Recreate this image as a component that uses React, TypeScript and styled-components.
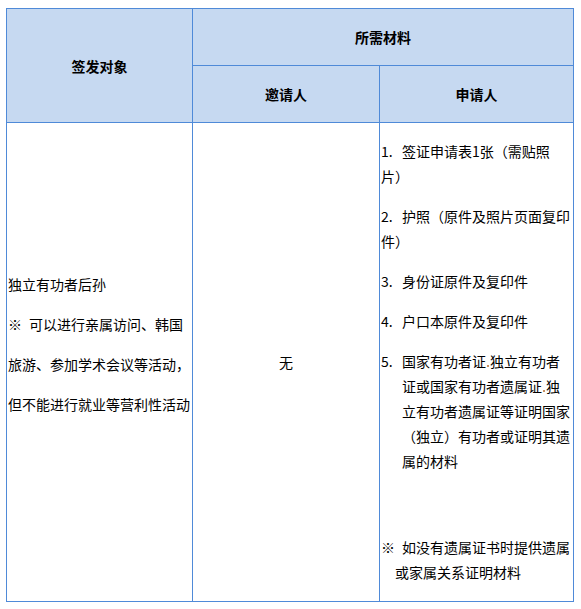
import React from 'react'
import styled, { createGlobalStyle } from 'styled-components'

const GlobalStyle = createGlobalStyle`
  html, body {
    margin: 0;
    padding: 0;
    background: #fff;
  }
  body {
    font-family: "Noto Sans CJK SC", "Liberation Sans", sans-serif;
    font-size: 14px;
    color: #000;
  }
`

const Page = styled.div`
  padding: 8px 0 0 6px;
`

const Table = styled.table`
  border-collapse: collapse;
  table-layout: fixed;
  width: 568px;
`

const Col = styled.col<{ $w: number }>`
  width: ${(p) => p.$w}px;
`

const Row = styled.tr<{ $h: number }>`
  height: ${(p) => p.$h}px;
`

const Th = styled.th`
  border: 1px solid #4f8ad8;
  background-color: #c6d9f1;
  font-weight: bold;
  font-size: 14px;
  text-align: center;
  vertical-align: middle;
  padding: 0;
`

const Td = styled.td<{ $center?: boolean }>`
  border: 1px solid #4f8ad8;
  vertical-align: middle;
  text-align: ${(p) => (p.$center ? 'center' : 'left')};
  padding: 0 1px;
`

const TargetBox = styled.div`
  padding-bottom: 37px;
`

const TargetLine = styled.div`
  line-height: 40px;
  white-space: nowrap;
`

const Stack = styled.div`
  display: flex;
  flex-direction: column;
  gap: 15px;
`

const Item = styled.p<{ $hang?: number; $gapTop?: number }>`
  margin: 0;
  margin-top: ${(p) => p.$gapTop ?? 0}px;
  line-height: 25px;
  white-space: nowrap;
  padding-left: ${(p) => p.$hang ?? 0}px;
  text-indent: -${(p) => p.$hang ?? 0}px;
`

const Num = styled.span`
  display: inline-block;
  width: 21px;
  text-indent: 0;
  line-height: 25px;
`

const Mark = styled.span`
  display: inline-block;
  width: 21px;
  text-indent: 0;
  line-height: 25px;
`

const Dot = styled.span`
  display: inline-block;
  width: 2px;
  height: 2px;
  margin: 0 1px;
  background-color: #c89060;
  vertical-align: 0;
`

export default function App() {
  return (
    <Page>
      <GlobalStyle />
      <Table>
        <colgroup>
          <Col $w={186} />
          <Col $w={187} />
          <Col $w={194} />
        </colgroup>
        <thead>
          <Row $h={57}>
            <Th rowSpan={2}>签发对象</Th>
            <Th colSpan={2}>所需材料</Th>
          </Row>
          <Row $h={57}>
            <Th>邀请人</Th>
            <Th>申请人</Th>
          </Row>
        </thead>
        <tbody>
          <Row $h={479}>
            <Td>
              <TargetBox>
                <TargetLine>独立有功者后孙</TargetLine>
                <TargetLine><Mark>※</Mark>可以进行亲属访问、韩国</TargetLine>
                <TargetLine>旅游、参加学术会议等活动，</TargetLine>
                <TargetLine>但不能进行就业等营利性活动</TargetLine>
              </TargetBox>
            </Td>
            <Td $center>无</Td>
            <Td>
              <Stack>
                <Item><Num>1.</Num>签证申请表1张（需贴照<br />片）</Item>
                <Item><Num>2.</Num>护照（原件及照片页面复印<br />件）</Item>
                <Item><Num>3.</Num>身份证原件及复印件</Item>
                <Item><Num>4.</Num>户口本原件及复印件</Item>
                <Item $hang={21}>
                  <Num>5.</Num>国家有功者证<Dot />独立有功者<br />
                  证或国家有功者遗属证<Dot />独<br />
                  立有功者遗属证等证明国家<br />
                  （独立）有功者或证明其遗<br />
                  属的材料
                </Item>
                <Item $hang={14} $gapTop={46}>
                  <Mark>※</Mark>如没有遗属证书时提供遗属<br />
                  或家属关系证明材料
                </Item>
              </Stack>
            </Td>
          </Row>
        </tbody>
      </Table>
    </Page>
  )
}
